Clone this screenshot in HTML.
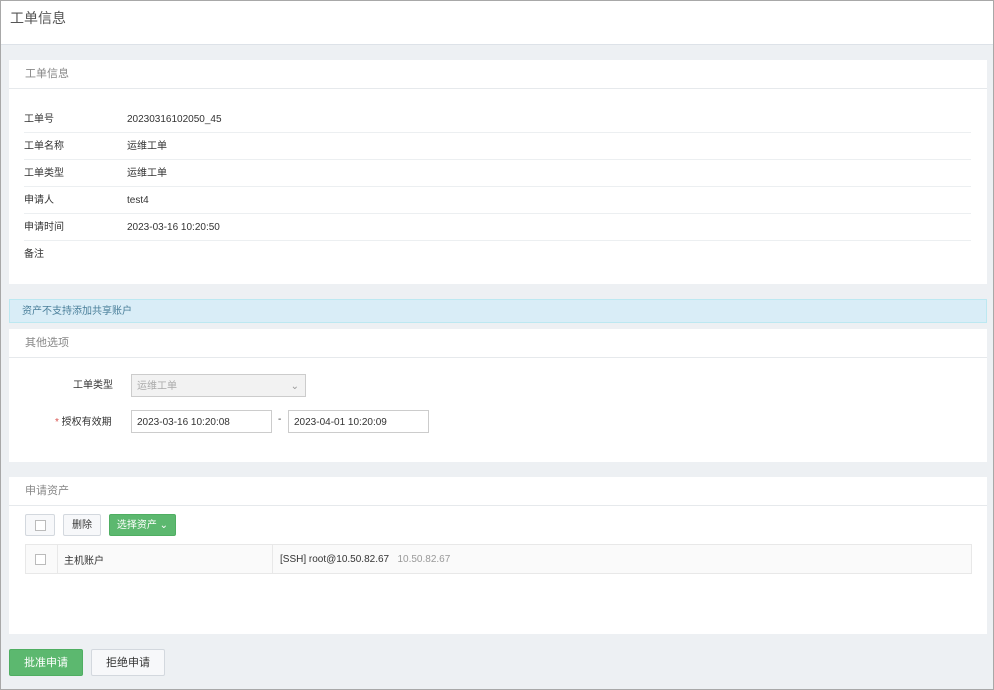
<!DOCTYPE html><html><head><meta charset="utf-8"><style>
*{box-sizing:border-box;margin:0;padding:0}
body{width:994px;height:690px;background:#edf0f3;font-family:"Liberation Sans","Noto Sans CJK SC",sans-serif;font-size:10px;color:#333;position:relative;overflow:hidden;border:1px solid #a8a8a8}
.a{position:absolute}
.hdr{left:0;top:0;width:992px;height:44px;background:#fff;border-bottom:1px solid #dde2e8}
.hdr span{position:absolute;left:9px;top:7px;font-size:14px;color:#555}
.panel{left:8px;width:978px;background:#fff}
.ph{height:29px;border-bottom:1px solid #e6e9ec;padding-left:16px;line-height:28px;color:#888;font-size:11px}
.row{position:absolute;left:15px;width:947px;height:27px;border-bottom:1px solid #eceff1;line-height:28px}
.row b{font-weight:normal;position:absolute;left:0}
.row i{font-style:normal;position:absolute;left:103px}
.inp{position:absolute;height:23px;border:1px solid #ccc;background:#fff;padding-left:5px;line-height:23px;font-size:10px}
.btn{position:absolute;height:22px;border:1px solid #d3d8de;background:#f7f8fa;border-radius:2px;text-align:center;line-height:21px}
.cb{position:absolute;width:11px;height:11px;border:1px solid #bbb;background:#fff}
</style></head><body>
<div class="a hdr"><span>工单信息</span></div>
<div class="a panel" style="top:59px;height:224px"><div class="ph">工单信息</div>
<div class="row" style="top:46px"><b>工单号</b><i>20230316102050_45</i></div>
<div class="row" style="top:73px"><b>工单名称</b><i>运维工单</i></div>
<div class="row" style="top:100px"><b>工单类型</b><i>运维工单</i></div>
<div class="row" style="top:127px"><b>申请人</b><i>test4</i></div>
<div class="row" style="top:154px"><b>申请时间</b><i>2023-03-16 10:20:50</i></div>
<div class="row" style="top:181px;border:0"><b>备注</b></div>
</div>
<div class="a" style="left:8px;top:298px;width:978px;height:24px;background:#d9edf7;border:1px solid #bce8f1;color:#4a7f9a;padding-left:12px;line-height:23px">资产不支持添加共享账户</div>
<div class="a panel" style="top:328px;height:133px"><div class="ph">其他选项</div>
<div class="a" style="left:64px;top:47px;color:#333">工单类型</div>
<div class="inp" style="left:122px;top:45px;width:175px;background:#f2f2f2;color:#aaa">运维工单<span style="position:absolute;right:6px;color:#999">⌄</span></div>
<div class="a" style="left:46px;top:84px"><span style="color:#d9534f">*</span> 授权有效期</div>
<div class="inp" style="left:122px;top:81px;width:141px">2023-03-16 10:20:08</div>
<div class="a" style="left:269px;top:85px">-</div>
<div class="inp" style="left:279px;top:81px;width:141px">2023-04-01 10:20:09</div>
</div>
<div class="a panel" style="top:476px;height:157px"><div class="ph">申请资产</div>
<div class="btn" style="left:16px;top:37px;width:30px"><div class="cb" style="left:9px;top:5px"></div></div>
<div class="btn" style="left:54px;top:37px;width:38px">删除</div>
<div class="btn" style="left:100px;top:37px;width:67px;background:#5cb86f;border-color:#4fae62;color:#fff">选择资产 ⌄</div>
<div class="a" style="left:16px;top:67px;width:947px;height:30px;background:#fafafa;border:1px solid #e8e8e8">
<div class="cb" style="left:9px;top:9px"></div>
<div class="a" style="left:31px;top:0;height:28px;border-left:1px solid #e8e8e8"></div>
<div class="a" style="left:38px;top:7px">主机账户</div>
<div class="a" style="left:246px;top:0;height:28px;border-left:1px solid #e8e8e8"></div>
<div class="a" style="left:254px;top:9px">[SSH] root@10.50.82.67 &nbsp; <span style="color:#999">10.50.82.67</span></div>
</div></div>
<div class="btn" style="left:8px;top:648px;width:74px;height:27px;line-height:26px;background:#5cb86f;border-color:#4fae62;color:#fff;font-size:11px">批准申请</div>
<div class="btn" style="left:90px;top:648px;width:74px;height:27px;line-height:26px;font-size:11px">拒绝申请</div>
</body></html>
